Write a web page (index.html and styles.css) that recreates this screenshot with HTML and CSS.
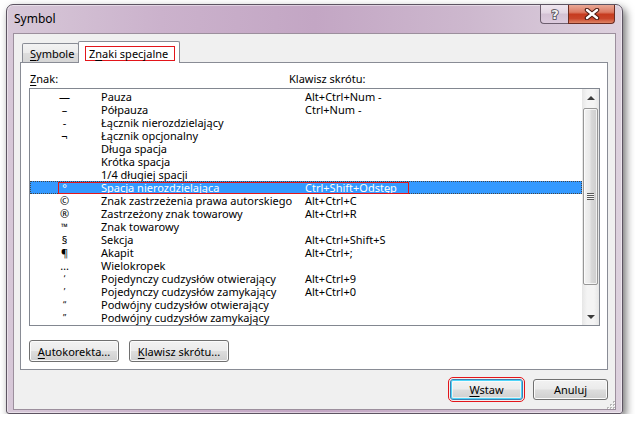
FILE: index.html
```html
<!DOCTYPE html>
<html lang="pl">
<head>
  <meta charset="UTF-8">
  <title>Symbol</title>
  <link rel="stylesheet" href="styles.css">
</head>
<body>

<div class="window">
  <div class="titlebar">
    <span class="title">Symbol</span>
    <div class="caption-btns">
      <span class="cap-btn help">
        <svg width="14" height="14" viewBox="0 0 14 14"><text x="7" y="12" text-anchor="middle" class="help-glyph">?</text></svg>
      </span>
      <span class="cap-btn close">
        <svg width="16" height="12" viewBox="0 0 16 12">
          <path d="M3 2 L13 10 M13 2 L3 10" stroke="#4a1a12" stroke-width="4.5" stroke-linecap="round"/>
          <path d="M3 2 L13 10 M13 2 L3 10" stroke="#fff" stroke-width="2.4" stroke-linecap="round"/>
        </svg>
      </span>
    </div>
  </div>

  <div class="client">
    <div class="tabs">
      <span class="tab"><u>S</u>ymbole</span>
      <span class="tab active"><span class="tab-mark">Z<u>n</u>aki specjalne</span></span>
    </div>

    <div class="page">
      <div class="labels">
        <span><u>Z</u>nak:</span>
        <span>Klawisz skrótu:</span>
      </div>

      <div class="list">
        <div class="rows">
          <div class="row"><span class="sym">—</span><span>Pauza</span><span>Alt+Ctrl+Num -</span></div>
          <div class="row"><span class="sym">–</span><span>Półpauza</span><span>Ctrl+Num -</span></div>
          <div class="row"><span class="sym">-</span><span>Łącznik nierozdzielający</span><span></span></div>
          <div class="row"><span class="sym">¬</span><span>Łącznik opcjonalny</span><span></span></div>
          <div class="row"><span class="sym"></span><span>Długa spacja</span><span></span></div>
          <div class="row"><span class="sym"></span><span>Krótka spacja</span><span></span></div>
          <div class="row"><span class="sym"></span><span>1/4 długiej spacji</span><span></span></div>
          <div class="row selected"><span class="sym">°</span><span>Spacja nierozdzielająca</span><span>Ctrl+Shift+Odstęp</span><i class="row-mark"></i></div>
          <div class="row"><span class="sym">©</span><span>Znak zastrzeżenia prawa autorskiego</span><span>Alt+Ctrl+C</span></div>
          <div class="row"><span class="sym">®</span><span>Zastrzeżony znak towarowy</span><span>Alt+Ctrl+R</span></div>
          <div class="row"><span class="sym small">™</span><span>Znak towarowy</span><span></span></div>
          <div class="row"><span class="sym">§</span><span>Sekcja</span><span>Alt+Ctrl+Shift+S</span></div>
          <div class="row"><span class="sym">¶</span><span>Akapit</span><span>Alt+Ctrl+;</span></div>
          <div class="row"><span class="sym">…</span><span>Wielokropek</span><span></span></div>
          <div class="row"><span class="sym small">‘</span><span>Pojedynczy cudzysłów otwierający</span><span>Alt+Ctrl+9</span></div>
          <div class="row"><span class="sym small">’</span><span>Pojedynczy cudzysłów zamykający</span><span>Alt+Ctrl+0</span></div>
          <div class="row"><span class="sym small">“</span><span>Podwójny cudzysłów otwierający</span><span></span></div>
          <div class="row"><span class="sym small">”</span><span>Podwójny cudzysłów zamykający</span><span></span></div>
        </div>
        <div class="scrollbar">
          <span class="sb-arrow"><i class="tri up"></i></span>
          <span class="sb-thumb"><i class="grip"></i></span>
          <span class="sb-track"></span>
          <span class="sb-arrow"><i class="tri down"></i></span>
        </div>
      </div>

      <div class="page-btns">
        <button class="btn autocorrect"><u>A</u>utokorekta...</button>
        <button class="btn shortcut"><u>K</u>lawisz skrótu...</button>
      </div>
    </div>

    <div class="dialog-btns">
      <button class="btn default"><u>W</u>staw</button>
      <button class="btn cancel">Anuluj</button>
    </div>

    <svg class="grip-corner" width="9" height="9" viewBox="0 0 9 9">
      <g fill="#b7b7b7">
        <rect x="7" y="1" width="2" height="2"/>
        <rect x="4" y="4" width="2" height="2"/><rect x="7" y="4" width="2" height="2"/>
        <rect x="1" y="7" width="2" height="2"/><rect x="4" y="7" width="2" height="2"/><rect x="7" y="7" width="2" height="2"/>
      </g>
      <g fill="#fff">
        <rect x="8" y="2" width="1" height="1"/>
        <rect x="5" y="5" width="1" height="1"/><rect x="8" y="5" width="1" height="1"/>
        <rect x="2" y="8" width="1" height="1"/><rect x="5" y="8" width="1" height="1"/><rect x="8" y="8" width="1" height="1"/>
      </g>
    </svg>
  </div>
</div>

</body>
</html>
```

FILE: styles.css
```css
body {
  margin: 0;
  background: #fff;
  font-family: "Noto Sans", "Open Sans", sans-serif;
  font-size: 11px;
  color: #000;
}

u {
  text-decoration-thickness: 1px;
  text-underline-offset: 2px;
}

/* dialog frame */
.window {
  box-sizing: border-box;
  width: 617px;
  height: 410px;
  margin: 4px 0 0 6px;
  padding: 0 6px 3px;
  border: 1px solid #5d5462;
  border-radius: 7px 7px 3px 3px;
  background: linear-gradient(90deg, #d7c8d8 0%, #cbb2cc 25%, #c3a6c4 50%, #cdb8ce 75%, #ddd1de 100%);
  box-shadow: 3px 4px 9px rgba(0, 0, 0, 0.55), inset 0 0 0 1px rgba(255, 255, 255, 0.45);
  display: flex;
  flex-direction: column;
}

.titlebar {
  height: 28px;
  display: flex;
  align-items: flex-start;
}

.title {
  flex: 1;
  padding: 6px 0 0 1px;
  font-size: 12px;
  line-height: 15px;
}

.caption-btns {
  display: flex;
  margin-right: 1px;
}

.cap-btn {
  box-sizing: border-box;
  height: 19px;
  display: flex;
  align-items: center;
  justify-content: center;
  border: 1px solid #6d5f6f;
  border-top: none;
}

.help {
  width: 28px;
  border-right: none;
  border-radius: 0 0 0 4px;
  background: linear-gradient(#efe6ef 0%, #e2d5e3 45%, #d3c1d4 50%, #dccbdd 100%);
}

.help-glyph {
  font-family: "DejaVu Sans", sans-serif;
  font-weight: bold;
  font-size: 13px;
  fill: #f4f4f4;
  stroke: #4b4450;
  stroke-width: 1.6px;
  paint-order: stroke;
}

.close {
  width: 47px;
  border-color: #6b2b21;
  border-radius: 0 0 4px 0;
  background: linear-gradient(#e9a896 0%, #dc7a63 40%, #c63b1f 52%, #c9452a 75%, #df8566 100%);
}

/* client area */
.client {
  flex: 1;
  position: relative;
  background: #f0f0f0;
  border: 1px solid #9c8f9d;
  padding: 7px 7px 0 6px;
  display: flex;
  flex-direction: column;
}

.tabs {
  display: flex;
  align-items: flex-end;
  height: 21px;
  padding-left: 2px;
  white-space: nowrap;
}

.tab {
  box-sizing: border-box;
  height: 19px;
  width: 57px;
  padding: 2px 0 0 7px;
  line-height: 15px;
  border: 1px solid #898c95;
  border-bottom: none;
  border-radius: 2px 2px 0 0;
  background: linear-gradient(#f3f3f3 0%, #ebebeb 50%, #dddddd 51%, #d6d6d6 100%);
}

.tab.active {
  position: relative;
  z-index: 1;
  height: 22px;
  width: 102px;
  margin-bottom: -1px;
  margin-left: -1px;
  padding: 4px 0 0 6px;
  background: #fff;
}

.tab-mark {
  box-sizing: border-box;
  display: block;
  width: 90px;
  height: 15px;
  line-height: 13px;
  padding-left: 3px;
  border: 1px solid #e3151a;
}

.page {
  box-sizing: border-box;
  height: 308px;
  width: 588px;
  background: #fff;
  border: 1px solid #898c95;
  padding: 8px 0 0 8px;
}

.labels {
  display: grid;
  grid-template-columns: 259px 1fr;
  padding-left: 1px;
  height: 15px;
  line-height: 15px;
}

/* list with the special characters */
.list {
  box-sizing: border-box;
  display: flex;
  width: 571px;
  height: 238px;
  margin-top: 2px;
  border: 1px solid #828790;
}

.rows {
  flex: 1;
  padding-top: 1px;
}

.row {
  position: relative;
  display: grid;
  grid-template-columns: 71px 204px 1fr;
  height: 13px;
  line-height: 13px;
  white-space: nowrap;
}

.row .sym {
  text-align: center;
  padding-right: 2px;
}

.row .sym.small {
  font-size: 9px;
}

.row.selected {
  background: #3399ff;
  color: #fff;
  outline: 1px dotted #444;
  outline-offset: -1px;
}

.row-mark {
  position: absolute;
  left: 28px;
  top: 1px;
  box-sizing: border-box;
  width: 351px;
  height: 12px;
  border: 1px solid #e3151a;
}

.scrollbar {
  width: 17px;
  display: flex;
  flex-direction: column;
  background: linear-gradient(90deg, #e6e6e6, #f4f4f4 30%, #f4f4f4 70%, #e6e6e6);
}

.sb-arrow {
  height: 17px;
  display: flex;
  align-items: center;
  justify-content: center;
}

.tri {
  width: 0;
  height: 0;
  border-left: 4px solid transparent;
  border-right: 4px solid transparent;
}

.tri.up {
  border-bottom: 4px solid #3c3c3c;
}

.tri.down {
  border-top: 4px solid #3c3c3c;
}

.sb-thumb {
  box-sizing: border-box;
  height: 177px;
  margin: 2px 1px 0;
  border: 1px solid #979797;
  border-radius: 2px;
  background: linear-gradient(90deg, #f3f3f3 0%, #e8e8e8 45%, #d9d9d9 55%, #cdcdcd 100%);
  box-shadow: inset 0 0 0 1px rgba(255, 255, 255, 0.7);
  display: flex;
  align-items: center;
  justify-content: center;
}

.grip {
  width: 7px;
  height: 7px;
  background: repeating-linear-gradient(#5a5a5a 0 1px, #f6f6f6 1px 2px);
}

.sb-track {
  flex: 1;
}

/* buttons */
.btn {
  box-sizing: border-box;
  height: 22px;
  padding: 0;
  border: 1px solid #707070;
  border-radius: 3px;
  background: linear-gradient(#f2f2f2 0%, #ebebeb 48%, #dddddd 52%, #cfcfcf 100%);
  box-shadow: inset 0 0 0 1px #fbfbfb;
  font-family: inherit;
  font-size: 11px;
  color: #000;
}

.page-btns {
  display: flex;
  gap: 10px;
  margin-top: 14px;
}

.autocorrect {
  width: 90px;
}

.shortcut {
  width: 100px;
}

.dialog-btns {
  display: flex;
  justify-content: flex-end;
  gap: 10px;
  margin-top: 9px;
}

.dialog-btns .btn {
  height: 21px;
}

.default {
  width: 73px;
  border-color: #3c7fb1;
  box-shadow: inset 0 0 0 1px #4fd4f8, inset 0 0 0 2px rgba(255, 255, 255, 0.6);
  outline: 1px solid #e3151a;
  outline-offset: 1px;
}

.cancel {
  width: 75px;
}

.grip-corner {
  position: absolute;
  right: 0;
  bottom: 0;
}
```
